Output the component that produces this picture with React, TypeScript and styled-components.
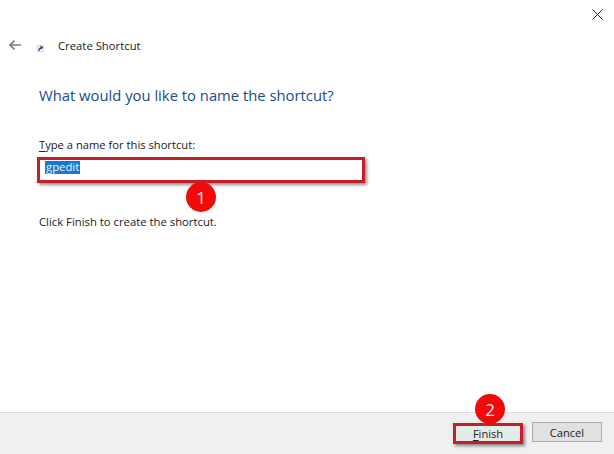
import React from "react";
import styled, { createGlobalStyle } from "styled-components";

const Global = createGlobalStyle`
  html, body { margin: 0; padding: 0; background: #fff; }
  body { font-family: "Open Sans", "Noto Sans", "Liberation Sans", sans-serif; }
`;

const Window = styled.div`
  width: 614px;
  height: 454px;
  display: flex;
  flex-direction: column;
  background: #fff;
  color: #1a1a1a;
  overflow: hidden;
  position: relative;
`;

const TitleBar = styled.div`
  height: 28px;
  display: flex;
  justify-content: flex-end;
  align-items: center;
  padding-right: 11px;
`;

const Header = styled.div`
  height: 36px;
  display: flex;
  align-items: center;
  padding-left: 9px;
`;

const IconSlot = styled.div`
  width: 12px;
  height: 10px;
  margin: -2px 16px 0 0;
  display: flex;
`;

const ShortcutIcon = styled.div`
  margin: 5px 14px 0 0;
  display: flex;
`;

const Title = styled.span`
  font-size: 11.3px;
  line-height: 16px;
  color: #202020;
`;

const Content = styled.div`
  flex: 1;
  padding: 21px 0 0 39px;
  display: flex;
  flex-direction: column;
`;

const Heading = styled.h1`
  margin: 0;
  font-size: 14.8px;
  line-height: 20px;
  font-weight: 400;
  color: #1c4a8c;
`;

const FieldLabel = styled.label`
  margin-top: 32px;
  font-size: 11.2px;
  line-height: 16px;
  color: #202020;
`;

const Mnemonic = styled.span`
  text-decoration: underline;
  text-underline-offset: 2px;
`;

const Field = styled.div`
  position: relative;
  margin-top: 6px;
  width: 320px;
  height: 16px;
  padding: 0 0 0 6px;
  display: flex;
  align-items: center;
`;

const Selected = styled.span`
  height: 13px;
  padding: 0 1px;
  display: flex;
  align-items: flex-start;
  background: #1a78cc;
  color: #eaf3fb;
  font-size: 11.3px;
  line-height: 12px;
`;

const Highlight = styled.div<{ $l: number; $t: number; $w: number; $h: number }>`
  position: absolute;
  left: ${(p) => p.$l}px;
  top: ${(p) => p.$t}px;
  width: ${(p) => p.$w}px;
  height: ${(p) => p.$h}px;
  box-sizing: border-box;
  border: 3px solid #c41e2a;
  box-shadow: 2px 2px 3px rgba(0, 0, 0, 0.45);
`;

const Hint = styled.p`
  margin: 39px 0 0;
  font-size: 11.3px;
  line-height: 16px;
  color: #202020;
`;

const Footer = styled.div`
  height: 42px;
  box-sizing: border-box;
  border-top: 1px solid #dcdcdc;
  background: #f0f0f0;
  display: flex;
  justify-content: flex-end;
  align-items: flex-start;
  gap: 10px;
  padding: 9px 12px 0 0;
`;

const Button = styled.div<{ $w: number; $primary?: boolean }>`
  position: relative;
  width: ${(p) => p.$w}px;
  height: 20px;
  margin-top: ${(p) => (p.$primary ? 1 : 0)}px;
  box-sizing: border-box;
  border: 1px solid ${(p) => (p.$primary ? "#2f7fc4" : "#adadad")};
  background: ${(p) => (p.$primary ? "#e3ece8" : "#e1e1e1")};
  display: flex;
  align-items: center;
  justify-content: center;
  font-size: 11.1px;
  color: #202020;
`;

const Badge = styled.div<{ $l: number; $t: number }>`
  position: absolute;
  left: ${(p) => p.$l}px;
  top: ${(p) => p.$t}px;
  width: 30px;
  height: 30px;
  border-radius: 50%;
  background: #f00a0a;
  color: #f6e6e6;
  display: flex;
  align-items: center;
  justify-content: center;
  font-size: 17px;
  line-height: 1;
`;

export default function App() {
  return (
    <Window>
      <Global />
      <TitleBar>
        <svg width="11" height="11" viewBox="0 0 11 11">
          <path d="M0.5 0.5 L10.5 10.5 M10.5 0.5 L0.5 10.5" stroke="#222" strokeWidth="1" fill="none" />
        </svg>
      </TitleBar>
      <Header>
        <IconSlot>
          <svg width="12" height="10" viewBox="0 0 12 10">
            <path d="M1 5 H12 M5.5 0.6 L1 5 L5.5 9.4" stroke="#7f7f7f" strokeWidth="1.7" fill="none" />
          </svg>
        </IconSlot>
        <ShortcutIcon>
          <svg width="7" height="7" viewBox="0 0 7 7">
            <rect x="0" y="0" width="7" height="7" fill="#d5dce8" />
            <rect x="1" y="1" width="5" height="5" fill="#f2f5fa" />
            <path d="M1.8 6 C1.8 4 2.6 3 4.6 2.6 M3.4 1.2 L5.5 2.4 L3.9 4.2" stroke="#24437a" strokeWidth="1.1" fill="none" />
          </svg>
        </ShortcutIcon>
        <Title>Create Shortcut</Title>
      </Header>
      <Content>
        <Heading>What would you like to name the shortcut?</Heading>
        <FieldLabel>
          <Mnemonic>T</Mnemonic>ype a name for this shortcut:
        </FieldLabel>
        <Field>
          <Selected>gpedit</Selected>
          <Highlight $l={-2} $t={-2} $w={328} $h={26} />
          <Badge $l={147} $t={23}>1</Badge>
        </Field>
        <Hint>Click Finish to create the shortcut.</Hint>
      </Content>
      <Footer>
        <Button $w={68} $primary>
          <span>
            <Mnemonic>F</Mnemonic>inish
          </span>
          <Highlight $l={-2} $t={-1} $w={70} $h={21} />
          <Badge $l={20} $t={-30}>2</Badge>
        </Button>
        <Button $w={70}>Cancel</Button>
      </Footer>
    </Window>
  );
}
